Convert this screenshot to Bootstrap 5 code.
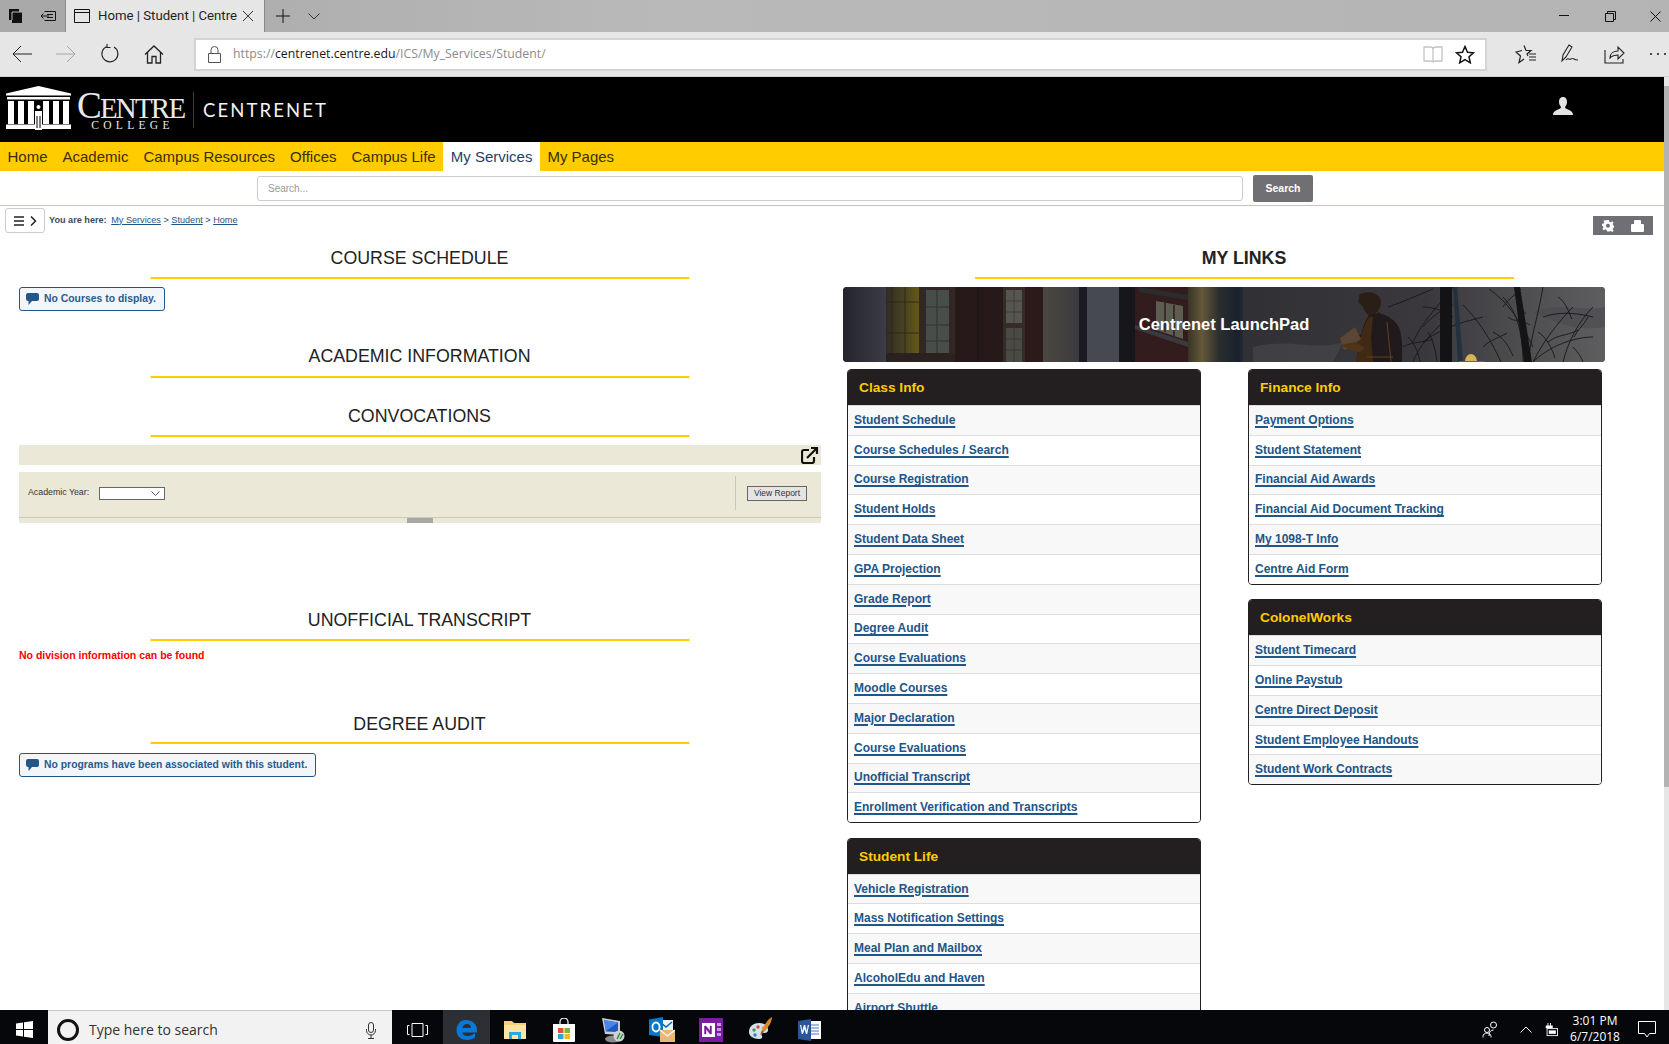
<!DOCTYPE html>
<html lang="en">
<head>
<meta charset="utf-8">
<title>Home | Student | Centre</title>
<link href="https://cdn.jsdelivr.net/npm/bootstrap@5.3.0/dist/css/bootstrap.min.css" rel="stylesheet">
<style>
html,body{height:100%;margin:0}
body{font-family:"Liberation Sans",Arial,sans-serif;background:#fff;color:#222;overflow:hidden}
.ui-font{font-family:"Open Sans","Noto Sans",sans-serif}
.shell{height:1044px}
/* browser chrome */
.tabbar{height:32px;background:linear-gradient(90deg,#a8a8a8,#b9b9b9 40%,#b4b4b4);flex:none}
.tab-ico{width:32px;height:32px}
.tabstrip-left{width:65px}
.bro-tab{width:200px;height:32px;background:#e6e6e6;border-left:1px solid #8a8a8a;border-right:1px solid #8a8a8a;font-size:13.2px;color:#1f1f1f;font-family:Roboto,sans-serif}
.tab-title{width:137px;white-space:nowrap;margin-left:8px}
.close-x{margin-left:7px}
.plus-ico{margin-left:11px}
.chev-ico{margin-left:18px}
.ctl-box{width:46px;height:32px}
.ctl-last{width:36px;padding-right:8px;justify-content:flex-end!important}
.toolbar{height:45px;background:#e6e6e6;border-bottom:1px solid #cfcfcf;flex:none;overflow:hidden}
.tool-btn{width:44px;height:44px;flex:none}
.addr{width:1293px;height:33px;margin-left:18px;flex:none;background:#fff;border:2px solid #d3d3d3;padding-right:4px;font-size:12.3px;color:#8c8c8c;white-space:nowrap}
.addr b{font-weight:400;color:#1a1a1a}
.addr-lock{width:37px}
.addr-url{flex:1}
.addr-end{width:32px}
.tools-right{margin-left:17px;flex:none}
/* page view */
.viewport{flex:1 1 auto;min-height:0;overflow:hidden}
.page-main{flex:1 1 auto;min-width:0;overflow:hidden}
.vscroll{width:5px;flex:none;background:#e6e6e6}
.vscroll-top{height:9px;background:#e6e6e6}
.vscroll-thumb{height:701px;background:#b3b3b3}
.site-head{height:65px;background:#000;color:#fff;padding-left:5px;flex:none}
.logo-bld{width:67px;height:44px;flex:none;margin-top:-3px}
.logo-words{margin-left:5px;margin-top:5px;width:107px;line-height:1;font-family:"Liberation Serif",serif;color:#e9e9e9}
.logo-main{font-size:29px;letter-spacing:-1.8px;display:block;height:27px;white-space:nowrap}
.logo-main i{font-style:normal;font-size:37px;line-height:26px}
.logo-sub{font-size:11.5px;letter-spacing:4.3px;display:block;text-align:center;margin-top:0;padding-left:4px}
.logo-rule{width:1px;height:36px;background:#3d3d3d;margin:0 9px 0 9px}
.site-name{font-family:"Lato","Open Sans",sans-serif;font-size:18.5px;letter-spacing:2.1px;font-weight:400;color:#f2f2f2;margin-top:2px}
.who{margin-right:91px;margin-top:-8px}
.yellow-nav{height:29px;background:#fc0;flex:none}
.nav-lnk{font-size:15px;padding:0 7.5px;color:#3d2c00;line-height:29px;text-decoration:none;white-space:nowrap}
.nav-lnk.is-on{background:#fff;color:#1f3f66}
.srch-row{height:35px;border-bottom:1px solid #fc0;padding-left:257px;flex:none}
.srch-in{width:986px;height:25px;border:1px solid #ccc;border-radius:3px;font-size:10px;color:#999;padding-left:10px;line-height:23px}
.srch-btn{width:60px;height:27px;margin-left:10px;background:#6f6f74;color:#fff;font-size:10.5px;font-weight:700;border-radius:2px;line-height:27px;text-align:center}
.crumb-row{height:30px;padding:2px 11px 0 5px;flex:none}
.menu-tog{width:40px;height:25px;border:1px solid #ccc;border-radius:3px}
.crumbs{font-size:9.15px;color:#2a4a6e;margin-left:4px;margin-top:-3px}
.crumbs strong{font-weight:700;margin-right:2px;color:#3a4a5c}
.crumbs a{color:#225588}
.page-ctl{width:60px;height:19px;background:#6f6f75;margin-top:8px}
.col-pair{padding-left:19px}
.left-pane{width:802px;flex:none}
.right-pane{width:802px;flex:none;margin-left:22px}
.sect-ttl{width:539px;height:43px;margin:0 auto;text-align:center;border-bottom:2px solid #fc0;font-size:17.8px;font-weight:400;color:#222;padding-top:9px;line-height:25px}
.left-pane .sect-ttl{transform:translateX(-.5px)}
.sect-ttl.heavy{font-weight:700}
.msg-box{display:inline-flex;align-items:center;height:24px;padding:0 8px 0 6px;background:#f2f6fb;border:1px solid #225588;border-radius:3px;color:#2a5a8c;font-size:10.4px;font-weight:700}
.msg-box svg{margin-right:5px}
.t1{margin-top:0;padding-top:10px}
.b1{margin-top:8px}
.t2{margin-top:23px}
.t3{margin-top:16px;padding-top:10px}
.rpt-top{height:20px;background:#ebe8d8;margin-top:8px;padding-right:2px}
.rpt-form{height:51px;background:#ebe8d8;margin-top:7px;padding:0 0 9px 9px;font-size:8.8px;color:#333}
.rpt-sel{width:66px;height:13px;border:1px solid #666;background:#fff;margin-left:10px}
.rpt-sep{width:1px;height:34px;background:#c9c7bb;margin-left:auto}
.rpt-btn{width:60px;height:15px;margin:0 14px 0 11px;background:#e4e4e4;border:1px solid #666;line-height:13px;text-align:center;font-size:8.5px}
.rpt-foot{height:6px;background:#ebe8d8;border-top:1px solid #c9c9c4;margin-top:-6px}
.rpt-grip{width:26px;height:5px;background:#a9a9a4}
.t4{margin-top:75px;padding-top:10px}
.err-line{color:#f00;font-size:10.5px;font-weight:700;margin-top:7px;line-height:14px}
.t5{margin-top:39px;padding-top:11px}
.b5{margin-top:9px}
.hero-stack{display:grid;width:762px;height:75px;margin-top:8px;border-radius:4px;overflow:hidden}
.hero-stack>*{grid-area:1/1}
.hero-pic{width:762px;height:75px;display:block}
.hero-txt{color:#fff;font-size:16.5px;font-weight:700;text-align:center;align-self:center;margin-top:0}
.cards-wrap{padding-left:4px;margin-top:7px;gap:47px}
.link-col{width:354px;flex:none}
.lcard{border:1px solid #231f20;border-radius:4px;overflow:hidden;background:#fff;margin-bottom:14.5px}
.lcard-h{height:35px;background:#231f20;color:#fc0;font-weight:700;font-size:13.7px;line-height:35px;padding-left:11px}
.lrow{height:29.8px;padding:0 0 1px 6px;font-size:12px;font-weight:700;display:flex;align-items:center;border-top:1px solid #ddd;background:#fff}
.lrow:nth-child(even){background:#f8f8f8}
.lrow a{color:#225588;text-decoration-thickness:2px;text-underline-offset:2px}
/* taskbar */
.taskbar{height:34px;background:#05070b;flex:none;color:#fff}
.taskbar svg{margin-top:5px}
.start-slot{width:48px}
.srch-task{width:344px;height:34px;background:#f2f2f2;border-top:1px solid #c5c5c5;color:#333;font-size:14px;white-space:nowrap}
.srch-task span{margin-left:9px;margin-top:4px;flex:1}
.tv-slot{width:51px}
.tb-app{width:49.2px;height:34px}
.tb-app.is-on{background:#2c2f33;width:47px}
.tray{margin-left:auto;font-size:12px;line-height:16px;text-align:center}
.tray-ico{width:36px}
.tray-batt{width:14px}
.tray-clock{width:60px;margin-left:7px;padding-top:3px}
.tray-note{width:44px}
</style>
</head>
<body>
<div class="shell d-flex flex-column">

<div class="tabbar d-flex align-items-center">
  <div class="tabstrip-left d-flex">
    <div class="tab-ico d-flex align-items-center justify-content-center"><svg width="16" height="16" viewBox="0 0 16 16"><path d="M1 1h10v3h3v11H4v-3H1z" fill="#111"/><path d="M4 4h10M4 4v8" stroke="#bbb" stroke-width="1"/></svg></div>
    <div class="tab-ico d-flex align-items-center justify-content-center"><svg width="16" height="14" viewBox="0 0 16 14" fill="none" stroke="#111"><path d="M4.500 2.500h11v9h-11M1 7h8M3.500 4.500L1 7l2.500 2.500M7 5.500h6M7 8.500h6"/></svg></div>
  </div>
  <div class="bro-tab d-flex align-items-center">
    <svg class="ms-2" width="16" height="14" viewBox="0 0 16 14" fill="none" stroke="#111"><path d="M.5.500h15v13H.5zM.5 3.500h15"/></svg>
    <div class="tab-title">Home | Student | Centre</div>
    <svg class="close-x" width="12" height="12" viewBox="0 0 12 12" stroke="#333"><path d="M1 1l10 10M11 1L1 11"/></svg>
  </div>
  <svg class="plus-ico" width="14" height="14" viewBox="0 0 14 14" stroke="#111"><path d="M7 0v14M0 7h14"/></svg>
  <svg class="chev-ico" width="12" height="7" viewBox="0 0 12 7" fill="none" stroke="#333"><path d="M.5.500L6 6 11.500.5"/></svg>
  <div class="ms-auto d-flex">
    <div class="ctl-box d-flex align-items-center justify-content-center"><svg width="10" height="2" viewBox="0 0 10 2"><path d="M0 .5h10" stroke="#111"/></svg></div>
    <div class="ctl-box d-flex align-items-center justify-content-center"><svg width="11" height="11" viewBox="0 0 11 11" fill="none" stroke="#111"><path d="M.5 2.500h8v8h-8zM2.500 2.500v-2h8v8h-2"/></svg></div>
    <div class="ctl-box ctl-last d-flex align-items-center"><svg width="11" height="11" viewBox="0 0 11 11" stroke="#111"><path d="M.5.500l10 10M10.500.5l-10 10"/></svg></div>
  </div>
</div>

<div class="toolbar d-flex align-items-center">
  <div class="tool-btn d-flex align-items-center justify-content-center"><svg width="20" height="18" viewBox="0 0 20 18" fill="none" stroke="#222"><path d="M20 9H1M9 1L1 9l8 8"/></svg></div>
  <div class="tool-btn d-flex align-items-center justify-content-center"><svg width="20" height="18" viewBox="0 0 20 18" fill="none" stroke="#a5a5a5"><path d="M0 9h19M11 1l8 8-8 8"/></svg></div>
  <div class="tool-btn d-flex align-items-center justify-content-center"><svg width="20" height="20" viewBox="0 0 20 20" fill="none" stroke="#222" stroke-width="1.100"><path d="M7 2.400A8 8 0 1 0 14 3M7 0v3.500h3.500"/></svg></div>
  <div class="tool-btn d-flex align-items-center justify-content-center"><svg width="20" height="19" viewBox="0 0 20 19" fill="none" stroke="#222" stroke-width="1.300"><path d="M1 9.500L10 1l9 8.500M3.500 7.500V18h4.500v-6.500h4V18h4.500V7.500"/></svg></div>
  <div class="addr d-flex align-items-center ui-font">
    <div class="addr-lock d-flex justify-content-center"><svg width="13" height="17" viewBox="0 0 13 17" fill="none" stroke="#555"><path d="M.5 7.500h12v9H.5zM3 7.500V4a3.500 3.500 0 0 1 7 0v3.500"/></svg></div>
    <div class="addr-url">https://<b>centrenet.centre.edu</b>/ICS/My_Services/Student/</div>
    <div class="addr-end d-flex justify-content-center"><svg width="20" height="17" viewBox="0 0 20 17" fill="none" stroke="#c4c4c4" stroke-width="1.300"><path d="M1 1h6c2 0 3 1 3 2 0-1 1-2 3-2h6v14h-6c-2 0-3 .5-3 1.500 0-1-1-1.500-3-1.500H1zM10 3v13"/></svg></div>
    <div class="addr-end d-flex justify-content-center"><svg width="20" height="19" viewBox="0 0 20 19" fill="none" stroke="#111" stroke-width="1.500"><path d="M10 1.500l2.500 5.700 6 .6-4.500 4 1.300 6L10 14.700l-5.300 3.100 1.300-6-4.500-4 6-.6z"/></svg></div>
  </div>
  <div class="tools-right d-flex">
    <div class="tool-btn d-flex align-items-center justify-content-center"><svg width="22" height="20" viewBox="0 0 22 20" fill="none" stroke="#222" stroke-width="1.200"><path d="M9 1.500l2 5h5l-4 3.500 1 2M9 15l-5 3.500 1.500-6.500L1 8l6-1.500M14 10h7M14 13h7M14 16h7"/></svg></div>
    <div class="tool-btn d-flex align-items-center justify-content-center"><svg width="20" height="20" viewBox="0 0 20 20" fill="none" stroke="#222" stroke-width="1.100"><path d="M2 17l1-6L9 1l3 2-6 10zM6 16c2-3 3 0 5-1s2-1 3 0 2 1 4 1"/></svg></div>
    <div class="tool-btn d-flex align-items-center justify-content-center"><svg width="21" height="19" viewBox="0 0 21 19" fill="none" stroke="#222" stroke-width="1.100"><path d="M1 5v13h18v-4M6 13c0-5 4-7 8-7V2l6 6-6 6v-4c-3 0-6 1-8 3z"/></svg></div>
    <div class="tool-btn d-flex align-items-center justify-content-center"><svg width="18" height="4" viewBox="0 0 18 4" fill="#222"><circle cx="2" cy="2" r="1.100"/><circle cx="9" cy="2" r="1.100"/><circle cx="16" cy="2" r="1.100"/></svg></div>
  </div>
</div>

<div class="viewport d-flex">
  <div class="page-main d-flex flex-column">
    <header class="site-head d-flex align-items-center">
      <svg class="logo-bld" viewBox="0 0 67 44" fill="#fff"><path d="M1 7.500L33.500 0 66 7.500v2H1z"/><path d="M2 11h63v2.500H2zM1 38.500h65V43H1z"/><path d="M3 15h6v23H3zM13 15h6v23h-6zM23 15h6v23h-6zM38 15h6v23h-6zM48 15h6v23h-6zM58 15h6v23h-6z"/><circle cx="33.500" cy="21" r="2"/><path d="M30 25h7v19h-7z"/><path d="M31.500 30h1v12h-1zM34.500 30h1v12h-1z" fill="#000"/></svg>
      <div class="logo-words">
        <span class="logo-main"><i>C</i>ENTRE</span>
        <span class="logo-sub">COLLEGE</span>
      </div>
      <div class="logo-rule"></div>
      <div class="site-name">CENTRENET</div>
      <div class="who ms-auto"><svg width="20" height="18" viewBox="0 0 20 18" fill="#e4e4e4"><path d="M10 0c3 0 4 2.500 4 5 0 2-1 4-2 5 0 1.500 2 2 4 3 2 .8 4 2 4 5H0c0-3 2-4.200 4-5 2-1 4-1.500 4-3C7 9 6 7 6 5c0-2.500 1-5 4-5z"/></svg></div>
    </header>
    <nav class="yellow-nav d-flex">
      <a class="nav-lnk" href="#">Home</a><a class="nav-lnk" href="#">Academic</a><a class="nav-lnk" href="#">Campus Resources</a><a class="nav-lnk" href="#">Offices</a><a class="nav-lnk" href="#">Campus Life</a><a class="nav-lnk is-on" href="#">My Services</a><a class="nav-lnk" href="#">My Pages</a>
    </nav>
    <div class="srch-row d-flex align-items-center">
      <div class="srch-in">Search...</div>
      <div class="srch-btn">Search</div>
    </div>
    <div class="crumb-row d-flex">
      <div class="menu-tog d-flex align-items-center justify-content-center">
        <svg width="23" height="10" viewBox="0 0 23 10" fill="none" stroke="#222" stroke-width="1.500"><path d="M0 1h10M0 5h10M0 9h10"/><path d="M17 .5L21.500 5 17 9.500"/></svg>
      </div>
      <div class="crumbs d-flex align-items-center"><strong>You are here:</strong>&nbsp;<a href="#">My Services</a>&nbsp;&gt;&nbsp;<a href="#">Student</a>&nbsp;&gt;&nbsp;<a href="#">Home</a></div>
      <div class="page-ctl ms-auto d-flex align-items-center justify-content-around">
        <svg width="12" height="12" viewBox="0 0 12 12" fill="#fff"><path d="M5 0h2l.3 1.700 1.400.6L10.200 1.300l1.400 1.400-1 1.500.6 1.400 1.700.3v2l-1.700.3-.6 1.400 1 1.500-1.400 1.400-1.500-1-1.400.6L7 12H5l-.3-1.700-1.400-.6-1.500 1L.4 9.300l1-1.500-.6-1.400L0 6V4l1.700-.3.600-1.400-1-1.500z" transform="scale(1 .96)"/><circle cx="6" cy="5.700" r="2" fill="#6f6f75"/></svg>
        <svg width="13" height="12" viewBox="0 0 13 12" fill="#fff"><path d="M3 1c0-1 1-1 1-1h5s1 0 1 1v3h2c1 0 1 1 1 1v6s0 1-1 1H1c-1 0-1-1-1-1V5s0-1 1-1h2z"/></svg>
      </div>
    </div>

    <div class="col-pair d-flex">
      <div class="left-pane">
        <h2 class="sect-ttl t1">COURSE SCHEDULE</h2>
        <div class="b1"><div class="msg-box"><svg width="13" height="12" viewBox="0 0 13 12" fill="#225588"><path d="M2 0h9a2 2 0 0 1 2 2v4a2 2 0 0 1-2 2H6l-3.500 4V8H2a2 2 0 0 1-2-2V2a2 2 0 0 1 2-2z"/></svg>No Courses to display.</div></div>
        <h2 class="sect-ttl t2">ACADEMIC INFORMATION</h2>
        <h2 class="sect-ttl t3">CONVOCATIONS</h2>
        <div class="rpt-top d-flex align-items-center justify-content-end">
          <svg width="18" height="18" viewBox="0 0 18 18" fill="none" stroke="#111" stroke-width="2.200"><path d="M8 4H3a2 2 0 0 0-2 2v9a2 2 0 0 0 2 2h8a2 2 0 0 0 2-2v-4"/><path d="M6 12l9-9M10 2h6v6"/></svg>
        </div>
        <div class="rpt-form d-flex align-items-center">
          <span>Academic Year:</span>
          <div class="rpt-sel d-flex align-items-center justify-content-end"><svg class="me-1" width="9" height="5" viewBox="0 0 9 5" fill="none" stroke="#555"><path d="M.5.500L4.500 4.500 8.500.5"/></svg></div>
          <div class="rpt-sep"></div>
          <div class="rpt-btn">View Report</div>
        </div>
        <div class="rpt-foot d-flex justify-content-center"><div class="rpt-grip"></div></div>
        <h2 class="sect-ttl t4">UNOFFICIAL TRANSCRIPT</h2>
        <div class="err-line">No division information can be found</div>
        <h2 class="sect-ttl t5">DEGREE AUDIT</h2>
        <div class="b5"><div class="msg-box"><svg width="13" height="12" viewBox="0 0 13 12" fill="#225588"><path d="M2 0h9a2 2 0 0 1 2 2v4a2 2 0 0 1-2 2H6l-3.500 4V8H2a2 2 0 0 1-2-2V2a2 2 0 0 1 2-2z"/></svg>No programs have been associated with this student.</div></div>
      </div>

      <div class="right-pane">
        <h2 class="sect-ttl t1 heavy">MY LINKS</h2>
        <div class="hero-stack">
          <svg class="hero-pic" viewBox="0 0 762 75" preserveAspectRatio="none">
            <defs>
              <linearGradient id="col1" x1="0" x2="1" y1="0" y2="0"><stop offset="0" stop-color="#24252c"/><stop offset="1" stop-color="#3c3d47"/></linearGradient>
              <linearGradient id="col2" x1="0" x2="1" y1="0" y2="0"><stop offset="0" stop-color="#4b4740"/><stop offset="1" stop-color="#3b3a3e"/></linearGradient>
              <linearGradient id="blurcol" x1="0" x2="1" y1="0" y2="0"><stop offset="0" stop-color="#3a3426"/><stop offset=".25" stop-color="#635839"/><stop offset=".55" stop-color="#2c2f2f"/><stop offset=".9" stop-color="#18202e"/><stop offset="1" stop-color="#2a2d38"/></linearGradient>
              <linearGradient id="sky" x1="0" x2="1" y1="0" y2="0"><stop offset="0" stop-color="#303035"/><stop offset=".5" stop-color="#3a383c"/><stop offset="1" stop-color="#5e5e60"/></linearGradient>
              <linearGradient id="winy" x1="0" x2="1" y1="0" y2="0"><stop offset="0" stop-color="#2e2c24"/><stop offset=".6" stop-color="#4e4620"/><stop offset="1" stop-color="#6b5b14"/></linearGradient>
            </defs>
            <rect width="762" height="75" fill="#1c1517"/>
            <rect width="45" height="75" fill="url(#col1)"/>
            <rect x="43" width="35" height="66" fill="url(#winy)"/>
            <path d="M49 0v66M62 0v66M43 15h35M43 46h35" stroke="#2a2415" stroke-width=".8"/>
            <rect x="76" width="36" height="75" fill="#332725"/>
            <rect x="83" y="3" width="23" height="68" fill="#474d48"/>
            <path d="M94 3v68M83 20h23M83 38h23M83 54h23" stroke="#33302c" stroke-width="1"/>
            <rect x="43" y="66" width="69" height="9" fill="#2b2220"/>
            <rect x="112" width="50" height="75" fill="#27191a"/>
            <path d="M135 0v75" stroke="#1b1213"/>
            <rect x="160" width="22" height="75" fill="#352c28"/>
            <rect x="163" y="3" width="16" height="33" fill="#55574f"/>
            <rect x="163" y="41" width="16" height="34" fill="#4a4a45"/>
            <path d="M171 3v72M163 14h16M163 25h16M163 52h16M163 63h16" stroke="#3a3632" stroke-width=".8"/>
            <rect x="182" width="20" height="75" fill="#2c1a1b"/>
            <rect x="200" width="36" height="75" fill="url(#col2)"/>
            <rect x="236" width="8" height="75" fill="#1a1a22"/>
            <rect x="244" width="32" height="75" fill="#46494f"/>
            <rect x="276" width="20" height="75" fill="#17161a"/>
            <rect x="292" width="53" height="75" fill="#331c1e"/>
            <path d="M292 42l53 18v-5l-53-17z" fill="#3a3a3e"/>
            <path d="M296 0l49 8v5L296 5z" fill="#2c2c30"/>
            <path d="M313 14l27 5v33l-27-9z" fill="#5e5d52"/>
            <path d="M322 16v29M331 18v31" stroke="#3c2c2a" stroke-width="2"/>
            <rect x="345" width="56" height="75" fill="url(#blurcol)"/>
            <rect x="400" width="362" height="75" fill="url(#sky)"/>
            <path d="M410 60c40-10 60 5 90-5l-10 20h-80zM690 25c30-10 50 0 72-5v20c-30 5-50-5-72-15z" fill="#4a4a4e" opacity=".6"/>
            <g fill="none" stroke="#17171a" stroke-width=".9">
              <path d="M545 20c15-5 30-12 45-18M580 40c10-12 20-18 30-22M610 0c-8 12-30 32-40 55M690 60c-12-25-25-45-44-58M620 18c20 20 30 40 38 57M700 0c-4 25-12 50-15 75M730 20c-15 15-30 35-40 55M750 50c-20 0-45 10-60 25M640 30c-20 5-40 10-60 25M570 75c5-15 20-30 30-40M660 10c15 15 20 40 20 65M720 75c5-20 15-40 30-55M580 20c10 0 25 5 30 10M700 30c15-5 30-5 50 0"/>
              <path d="M560 60c10-6 20-4 30-8M640 60c8-8 14-8 24-14M665 30c5 5 15 3 22 8M705 55c10-8 20-6 30-12M715 10c8 5 10 14 14 22M675 5c3 8 3 18 8 22M745 30c-4 8-10 12-14 20M650 45c10 5 16 14 20 24M695 45c8 5 14 16 17 26M730 60c5 5 8 10 10 15M660 20c5-8 12-12 18-18M565 50c6 6 10 14 12 25M585 45c5 8 8 20 9 30M540 30l-8-8"/>
            </g>
            <rect x="597" width="12" height="75" fill="#131214"/>
            <path d="M610 0l4 0 6 75h-5z" fill="#23303e"/>
            <path d="M671 0h6l12 75h-8z" fill="#141316"/>
            <path d="M622 75c0-5 3-8 6-8s6 3 6 8z" fill="#d9b35c"/>
            <path d="M616 74h26v1h-26z" fill="#8a5a22"/>
            <path d="M516 8c8-5 20-3 22 6 1 5-3 9-4 11l-3 3-5 1c-1-3-6-5-6-9l-5-5 1-3z" fill="#2a1f17"/>
            <path d="M526 28l10-2c9 2 18 8 21 17 3 12 2 22 2 32h-46c2-6 1-14 3-18l-16-2v-6l18-1c2-8 4-14 8-20z" fill="#201a1c"/>
            <path d="M513 75c1-6 2-12 3-18l-18-2 0-6 20 1c2-8 4-14 8-20l4 0-2 20 2 25z" fill="#412a14"/>
            <path d="M544 35l4 40M524 70h26" stroke="#63401e" stroke-width="1" fill="none"/>
            <path d="M497 51l15-11 6 12-16 11-2-2z" fill="#5a4634"/>
            <path d="M497 58l12 6 8 1 5-4-10-6z" fill="#50341a"/>
          </svg>
          <div class="hero-txt">Centrenet LaunchPad</div>
        </div>
        <div class="cards-wrap d-flex">
          <div class="link-col">
            <div class="lcard">
              <div class="lcard-h">Class Info</div>
              <div class="lrow"><a href="#">Student Schedule</a></div>
              <div class="lrow"><a href="#">Course Schedules / Search</a></div>
              <div class="lrow"><a href="#">Course Registration</a></div>
              <div class="lrow"><a href="#">Student Holds</a></div>
              <div class="lrow"><a href="#">Student Data Sheet</a></div>
              <div class="lrow"><a href="#">GPA Projection</a></div>
              <div class="lrow"><a href="#">Grade Report</a></div>
              <div class="lrow"><a href="#">Degree Audit</a></div>
              <div class="lrow"><a href="#">Course Evaluations</a></div>
              <div class="lrow"><a href="#">Moodle Courses</a></div>
              <div class="lrow"><a href="#">Major Declaration</a></div>
              <div class="lrow"><a href="#">Course Evaluations</a></div>
              <div class="lrow"><a href="#">Unofficial Transcript</a></div>
              <div class="lrow"><a href="#">Enrollment Verification and Transcripts</a></div>
            </div>
            <div class="lcard">
              <div class="lcard-h">Student Life</div>
              <div class="lrow"><a href="#">Vehicle Registration</a></div>
              <div class="lrow"><a href="#">Mass Notification Settings</a></div>
              <div class="lrow"><a href="#">Meal Plan and Mailbox</a></div>
              <div class="lrow"><a href="#">AlcoholEdu and Haven</a></div>
              <div class="lrow"><a href="#">Airport Shuttle</a></div>
            </div>
          </div>
          <div class="link-col">
            <div class="lcard">
              <div class="lcard-h">Finance Info</div>
              <div class="lrow"><a href="#">Payment Options</a></div>
              <div class="lrow"><a href="#">Student Statement</a></div>
              <div class="lrow"><a href="#">Financial Aid Awards</a></div>
              <div class="lrow"><a href="#">Financial Aid Document Tracking</a></div>
              <div class="lrow"><a href="#">My 1098-T Info</a></div>
              <div class="lrow"><a href="#">Centre Aid Form</a></div>
            </div>
            <div class="lcard">
              <div class="lcard-h">ColonelWorks</div>
              <div class="lrow"><a href="#">Student Timecard</a></div>
              <div class="lrow"><a href="#">Online Paystub</a></div>
              <div class="lrow"><a href="#">Centre Direct Deposit</a></div>
              <div class="lrow"><a href="#">Student Employee Handouts</a></div>
              <div class="lrow"><a href="#">Student Work Contracts</a></div>
            </div>
          </div>
        </div>
      </div>
    </div>
  </div>
  <div class="vscroll">
    <div class="vscroll-top"></div>
    <div class="vscroll-thumb"></div>
  </div>
</div>

<footer class="taskbar d-flex align-items-center ui-font">
  <div class="start-slot d-flex justify-content-center"><svg width="17" height="17" viewBox="0 0 17 17" fill="#fff"><path d="M0 2.400l7-1v6.600H0zM8 1.200L17 0v8H8zM0 9h7v6.600l-7-1zM8 9h9v8l-9-1.200z"/></svg></div>
  <div class="srch-task d-flex align-items-center">
    <svg class="ms-2" width="24" height="24" viewBox="0 0 24 24" fill="none" stroke="#111" stroke-width="3"><circle cx="12" cy="12" r="9.500"/></svg>
    <span>Type here to search</span>
    <svg class="me-3" width="10" height="17" viewBox="0 0 10 17" fill="none" stroke="#333"><rect x="2.500" y=".5" width="5" height="10" rx="2.500"/><path d="M.5 7v1.500a4.500 4.500 0 0 0 9 0V7M5 13v3M2 16.500h6"/></svg>
  </div>
  <div class="tv-slot d-flex justify-content-center"><svg width="21" height="14" viewBox="0 0 21 14" fill="none" stroke="#fff"><path d="M5 .5h11v13H5zM2.500 2.500h-2v9h2M18.500 2.500h2v9h-2"/></svg></div>
  <div class="tb-app is-on d-flex align-items-center justify-content-center"><svg width="21" height="22" viewBox="0 0 21 22"><path d="M10 1C4 1 .5 6 .5 11.500 .5 18 6 21 11 21c3.500 0 6-1 8-2.500v-4.500c-2 2-5 3-7.500 3C8 17 6.500 15 6.500 13.500H21v-2C21 5 16 1 10 1zM6.500 9c.5-2.500 2-4 4.500-4s4 1.500 4 4z" fill="#0a78d7"/></svg></div>
  <div class="tb-app d-flex align-items-center justify-content-center"><svg width="22" height="19" viewBox="0 0 22 19"><path d="M0 1h8l2 2h12v16H0z" fill="#f6d26c"/><path d="M0 5h22v14H0z" fill="#fbe5a2"/><path d="M5 19v-7h12v7h-3v-4H8v4z" fill="#2fa6dc"/></svg></div>
  <div class="tb-app d-flex align-items-center justify-content-center"><svg width="24" height="24" viewBox="0 0 24 24"><path d="M8 7V4a4 4 0 0 1 8 0v3" fill="none" stroke="#e8e8e8" stroke-width="1.300"/><path d="M1 6h22v17a1 1 0 0 1-1 1H2a1 1 0 0 1-1-1z" fill="#fff"/><path d="M6 10h5.500v5H6z" fill="#e8502a"/><path d="M12.500 10H18v5h-5.500z" fill="#7db63b"/><path d="M6 16h5.500v5H6z" fill="#2ea3dc"/><path d="M12.500 16H18v5h-5.500z" fill="#f7b91c"/></svg></div>
  <div class="tb-app d-flex align-items-center justify-content-center"><svg width="24" height="26" viewBox="0 0 24 26"><path d="M1 1l18 3v14L4 17z" fill="#c9ced6"/><path d="M3 3l14 2.500V15L5 14.500z" fill="#1f57c8"/><path d="M3 3l14 2.500L5 14z" fill="#4a86e8"/><ellipse cx="12" cy="22" rx="8" ry="3.500" fill="#8a8a8a"/><circle cx="18" cy="19" r="5.500" fill="#cfd3cf"/><path d="M16 22l3-6M19 22l3-5" stroke="#1f8a3a" stroke-width="1.300"/></svg></div>
  <div class="tb-app d-flex align-items-center justify-content-center"><svg width="26" height="25" viewBox="0 0 26 25"><path d="M10 3h14v14H10z" fill="#eaf3fb"/><path d="M11 5l6 5 6-5" fill="none" stroke="#0a63b0" stroke-width="1.500"/><path d="M0 2.500L14 0v20L0 18z" fill="#0a78c8"/><ellipse cx="7" cy="10" rx="3.600" ry="4.500" fill="none" stroke="#fff" stroke-width="1.800"/><path d="M11 13h15v12H11z" fill="#e8b87b"/><path d="M11 13l7.500 6 7.500-6" fill="none" stroke="#fff" stroke-width="1.100"/></svg></div>
  <div class="tb-app d-flex align-items-center justify-content-center"><svg width="24" height="24" viewBox="0 0 24 24"><path d="M0 0h24v24H0z" fill="#7a1ea1"/><path d="M3 5h13v14H3z" fill="#fff"/><path d="M5.500 16V8h1.500l4 5V8h1.500v8H11l-4-5v5z" fill="#7a1ea1" stroke="#7a1ea1" stroke-width=".5"/><path d="M18 5h4v3h-4zM18 10h4v3h-4zM18 15h4v3h-4z" fill="#c69be0"/></svg></div>
  <div class="tb-app d-flex align-items-center justify-content-center"><svg width="25" height="25" viewBox="0 0 25 25"><path d="M1 15C1 9 6 6 11 6c6 0 9 3 9 7 0 3-3 3-5 3-1 0-2 1-1 3 .8 2-1 3-3 3-6 0-10-3-10-7z" fill="#d6e2ea"/><circle cx="6" cy="13" r="1.700" fill="#38a048"/><circle cx="10" cy="10" r="1.700" fill="#d84a3a"/><circle cx="7" cy="18" r="1.700" fill="#3a7ac8"/><circle cx="15" cy="11" r="1.700" fill="#e0b83a"/><path d="M24 0c0 4-3 10-8 15l-2-2c3-6 6-11 10-13z" fill="#d98a26"/><path d="M14 13l2 2-4 3z" fill="#8a5a2a"/></svg></div>
  <div class="tb-app d-flex align-items-center justify-content-center"><svg width="23" height="22" viewBox="0 0 23 22"><path d="M8 2h15v18H8z" fill="#fff"/><path d="M12 6h9M12 9h9M12 12h9M12 15h9" stroke="#4a78bd"/><path d="M0 2l13-2v22L0 20z" fill="#2a5699"/><path d="M2 6l1.800 9h1.200l1.500-5 1.500 5h1.200L11 6H9.800l-1 6-1.700-6H5.900l-1.700 6-1-6z" fill="#fff"/></svg></div>
  <div class="tray d-flex align-items-center">
    <div class="tray-ico d-flex justify-content-center"><svg width="17" height="17" viewBox="0 0 17 17" fill="none" stroke="#fff"><circle cx="11.500" cy="4" r="3"/><path d="M7 15v-1c0-3 2-5 4.500-5"/><circle cx="5" cy="9" r="2.500"/><path d="M1 16.500v-1c0-2 1.800-3.500 4-3.500s4 1.500 4 3.500v1"/></svg></div>
    <div class="tray-ico d-flex justify-content-center"><svg width="12" height="7" viewBox="0 0 12 7" fill="none" stroke="#fff"><path d="M.5 6.500L6 1l5.500 5.500"/></svg></div>
    <div class="tray-batt d-flex justify-content-center"><svg width="16" height="15" viewBox="0 0 16 15" fill="#fff"><path d="M4 0h1v3H4zM7 0h1v3H7zM2 3h8v3H2zM5 6h1v3H5z"/><rect x="3.500" y="6.500" width="12" height="8" fill="#05070b" stroke="#fff"/><rect x="5.500" y="8.500" width="8" height="4"/></svg></div>
    <div class="tray-clock"><div>3:01 PM</div><div>6/7/2018</div></div>
    <div class="tray-note d-flex justify-content-center"><svg width="18" height="17" viewBox="0 0 18 17" fill="none" stroke="#fff"><path d="M.5.500h17v12h-6L9 16l-2.500-3.500h-6z"/></svg></div>
  </div>
</footer>
</div>
<script src="https://cdn.jsdelivr.net/npm/bootstrap@5.3.0/dist/js/bootstrap.bundle.min.js"></script>
</body>
</html>
